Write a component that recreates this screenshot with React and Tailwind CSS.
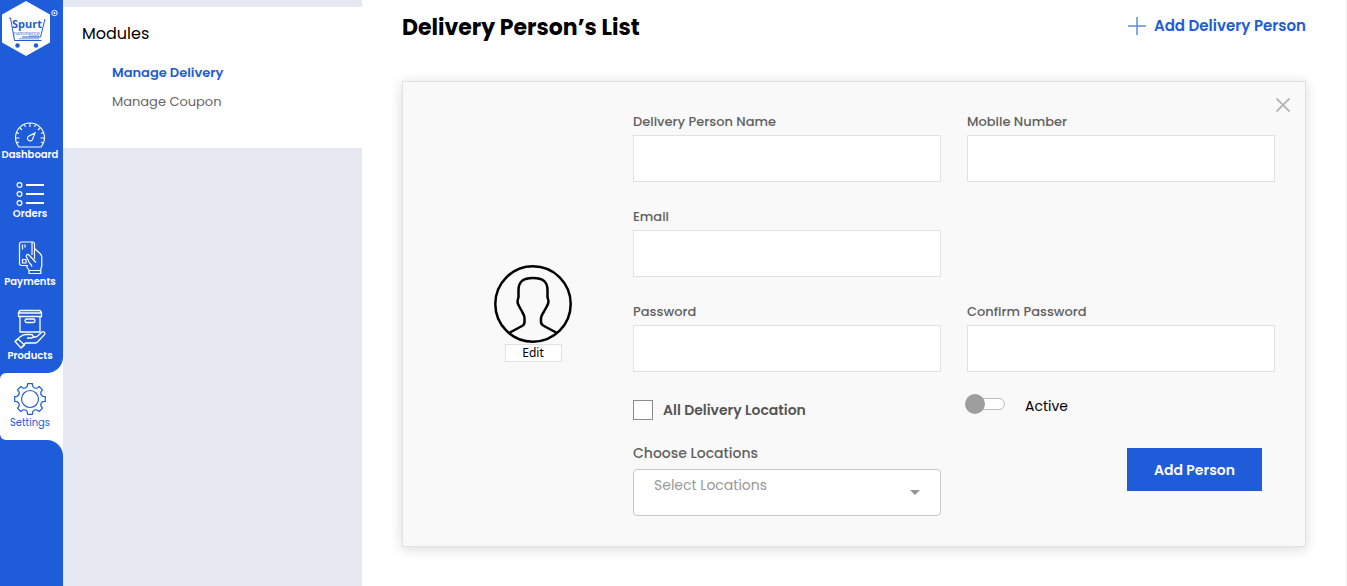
import { useState } from "react"

const gearPath = (() => {
    const point = (radius, angle) => {
        const rad = (angle * Math.PI) / 180
        return `${(17 + radius * Math.cos(rad)).toFixed(2)} ${(17 + radius * Math.sin(rad)).toFixed(2)}`
    }
    let d = ""
    for (let i = 0; i < 8; i++) {
        const a = i * 45 - 90
        d += `${i === 0 ? "M" : "L"}${point(13, a - 12)}L${point(15.5, a - 9)}`
        d += `L${point(15.5, a + 9)}L${point(13, a + 12)}`
        d += `Q${point(11, a + 22.5)} ${point(13, a + 33)}`
    }
    return d + "Z"
})()

function Logo() {
    return (
        <svg viewBox="0 0 63 57" className="w-full" role="img" aria-label="Spurt Commerce">
            <path d="M26 1 50 14.5v28L26 56 2 42.500v-28z" fill="#fff" />
            <g fill="none" stroke="#1e5cd9" strokeWidth="1">
                <path d="M9 18h1.500l4 22.500h27M45 19l-4.500 18H22" />
                <path d="M19 38.800h20M29 36h10" opacity=".6" />
            </g>
            <circle cx="17.500" cy="45.500" r="2.200" fill="#1e5cd9" />
            <circle cx="36" cy="45.500" r="2.200" fill="#1e5cd9" />
            <text x="27" y="28" textAnchor="middle" fontSize="11" fontWeight="700" fill="#1e5cd9" fontFamily="Open Sans, sans-serif">Spurt</text>
            <text x="26.500" y="35" textAnchor="middle" fontSize="5" fontStyle="italic" fill="#1e5cd9" fontFamily="DejaVu Sans, sans-serif">commerce</text>
            <circle cx="54.500" cy="13" r="2.700" fill="none" stroke="#fff" />
            <circle cx="54.500" cy="13" r="1" fill="#fff" />
        </svg>
    )
}

function DashboardIcon() {
    return (
        <svg viewBox="0 0 32 26" className="h-[26px] w-8" fill="none" stroke="currentColor" strokeWidth="1.1">
            <path d="M5 25A14.500 14.500 0 1 1 27 25Z" />
            <path d="M16 1v4M1.500 16h4M30.500 16h-4M5.700 5.700l2.300 2.300M26.300 5.700 24 8M10.400 2.600l1 2.300M21.600 2.600l-1 2.300M2.600 10.400l2.300 1M29.400 10.400l-2.300 1M3 21l2-1M29 21l-2-1" />
            <path d="m21 11-2.600 6.500a2.600 2.600 0 1 1-3.500-3.500z" />
        </svg>
    )
}

function OrdersIcon() {
    return (
        <svg viewBox="0 0 30 26" className="h-[26px] w-[30px]" fill="none" stroke="currentColor">
            <circle cx="4.500" cy="4" r="2.400" strokeWidth="1.200" />
            <circle cx="4.500" cy="13" r="2.400" strokeWidth="1.200" />
            <circle cx="4.500" cy="22" r="2.400" strokeWidth="1.200" />
            <path d="M11 4h18M11 13h18M11 22h18" strokeWidth="2" />
        </svg>
    )
}

function PaymentsIcon() {
    return (
        <svg viewBox="0 0 26 34" className="h-[34px] w-[26px]" fill="none" stroke="currentColor" strokeWidth="1.200" strokeLinejoin="round">
            <path d="M11 24.500H4.500a2 2 0 0 1-2-2V3a2 2 0 0 1 2-2h11a2 2 0 0 1 2 2v15" />
            <path d="M5.500 3.500v5M8 3.500v3M15 1v13M5.500 18.500H9V22H5.500z" />
            <path d="M17.500 7.500 23.500 13c.9 1 1.300 2 1.300 3.500V25l-1 3v4.500H12V29l-2-2.500V24" />
            <path d="M15 25.500c-.5-2-2-2.500-3-4.500l-2.500-5c-.6-2 1-3.500 2.500-2l7 7.500M12 29.500h11.500" />
        </svg>
    )
}

function ProductsIcon() {
    return (
        <svg viewBox="0 0 32 40" className="h-10 w-8" fill="none" stroke="currentColor" strokeWidth="1.300" strokeLinejoin="round">
            <path d="M4.500 3.500 6 1.500h20l1.500 2v4h-23zM4.500 4h23M6 7.500V23h20V7.500" />
            <rect x="11" y="10" width="10" height="3.500" rx="1.700" />
            <path d="M1 32.500 6 28c2-1.800 3.500-2.500 6-2.500h5c2.500 0 3 3 .5 3.500H13M18.500 28.500l4.500-1 5-4.500c1.800-1 3.500.5 2.500 2.500l-7 7.500c-1 1-1.500 1-3 1h-9l-3.500 4" />
            <path d="m1 32.500 3-2.500 6.500 6-3.500 3z" />
        </svg>
    )
}

function SettingsIcon() {
    return (
        <svg viewBox="0 0 34 34" className="h-[34px] w-[34px]" fill="none" stroke="currentColor" strokeWidth="1.200" strokeLinejoin="round">
            <path d={gearPath} />
            <circle cx="17" cy="17" r="8.500" />
        </svg>
    )
}

function NavItem({ icon, label }) {
    return (
        <a href="#" className="flex flex-col items-center text-[10px] leading-[14px] font-semibold text-white">
            {icon}
            {label}
        </a>
    )
}

function Sidebar() {
    return (
        <nav className="flex w-[63px] shrink-0 flex-col bg-white">
            <div className="rounded-br-2xl bg-[#1e5cd9] pb-2.5">
                <Logo />
                <div className="flex flex-col pt-[65px] pr-[3px]">
                    <NavItem icon={<DashboardIcon />} label="Dashboard" />
                    <div className="mt-[19px]">
                        <NavItem icon={<OrdersIcon />} label="Orders" />
                    </div>
                    <div className="mt-5">
                        <NavItem icon={<PaymentsIcon />} label="Payments" />
                    </div>
                    <div className="mt-5">
                        <NavItem icon={<ProductsIcon />} label="Products" />
                    </div>
                </div>
            </div>
            <div className="bg-[#1e5cd9]">
                <a href="#" className="flex flex-col items-center rounded-l-md bg-white pt-[9px] pr-[3px] pb-2.5 text-[10px] leading-[14px] text-[#1e5cd9]">
                    <SettingsIcon />
                    Settings
                </a>
            </div>
            <div className="flex-1 rounded-tr-2xl bg-[#1e5cd9]" />
        </nav>
    )
}

function Field({ id, label, type = "text" }) {
    return (
        <div className="flex flex-col gap-[3px]">
            <label htmlFor={id} className="text-[13px] leading-5 font-medium text-[#606060]">{label}</label>
            <input id={id} type={type} className="h-[47px] w-full border border-[#e1e1e1] bg-white px-3 text-sm outline-none" />
        </div>
    )
}

export default function App() {
    const [active, setActive] = useState(false)

    return (
        <div className="flex min-h-screen bg-white font-['Poppins','Inter',sans-serif] text-black">
            <Sidebar />

            {/* Modules */}
            <aside className="w-[299px] shrink-0 bg-[#e6e9f2] pt-[7px]">
                <div className="bg-white px-[19px] pt-[17px] pb-9">
                    <h2 className="text-base leading-5">Modules</h2>
                    <ul className="flex flex-col gap-[9px] pt-[19px] pl-[30px] text-[13px] leading-5">
                        <li><a href="#" className="font-semibold text-[#1e5cd9]">Manage Delivery</a></li>
                        <li><a href="#" className="text-[#666]">Manage Coupon</a></li>
                    </ul>
                </div>
            </aside>

            <main className="min-w-0 flex-1 border-r border-[#eee] px-10 pt-2">
                {/* Header */}
                <div className="flex h-9 items-center justify-between">
                    <h1 className="pt-0.5 text-[22px] font-bold">Delivery Person’s List</h1>
                    <button type="button" className="flex items-center gap-2 text-[15px] font-semibold text-[#1e5cd9]">
                        <svg viewBox="0 0 18 18" className="h-[18px] w-[18px]" stroke="#1e5cd9" strokeWidth="1.500" aria-hidden="true">
                            <path d="M9 0v18M0 9h18" opacity=".7" />
                        </svg>
                        Add Delivery Person
                    </button>
                </div>

                <form className="relative mt-[37px] flex border border-[#e1e1e1] bg-[#f9f9f9] py-[30px] pr-[30px] shadow-[0_2px_12px_rgba(0,0,0,0.15)]">
                    <button type="button" aria-label="Close" className="absolute top-4 right-[15px]">
                        <svg viewBox="0 0 14 14" className="h-3.5 w-3.5" stroke="#b0b0b0" strokeWidth="1.700">
                            <path d="m.5.500 13 13M13.500.500l-13 13" />
                        </svg>
                    </button>

                    {/* Avatar */}
                    <div className="flex w-[230px] shrink-0 flex-col items-center justify-center pb-0.5 pl-[30px]">
                        <svg viewBox="0 0 78 78" className="h-[78px] w-[78px]" fill="none" stroke="#000" strokeWidth="2.500" strokeLinejoin="round" aria-hidden="true">
                            <circle cx="39" cy="39" r="37.700" />
                            <path d="M15 68l13-7c2-1 2.500-2 2.500-4v-4c0-2-1-4-2.500-6.500L25 41c-1.800-3-1.800-6-.5-8.500V25c0-8 4-12 14.500-12s14.500 4 14.500 12v7.500c1.300 2.500 1.300 5.500-.5 8.500l-3 5.500C48.500 49 47 51 47 53v4c0 2 1 3 3 4l13 7" />
                        </svg>
                        <button type="button" className="mt-px h-[18px] w-[57px] border border-[#e1e1e1] bg-white font-['Noto_Sans',sans-serif] text-xs leading-4">Edit</button>
                    </div>

                    {/* Fields */}
                    <div className="min-w-0 flex-1">
                        <div className="grid grid-cols-2 gap-x-[26px] gap-y-[25px]">
                            <Field id="name" label="Delivery Person Name" />
                            <Field id="mobile" label="Mobile Number" />
                            <div className="col-span-2 grid grid-cols-2 gap-x-[26px]">
                                <Field id="email" label="Email" type="email" />
                            </div>
                            <Field id="password" label="Password" type="password" />
                            <Field id="confirm" label="Confirm Password" type="password" />

                            <label className="flex h-[26px] items-center gap-2.5 text-sm font-semibold text-[#555]">
                                <input type="checkbox" className="h-5 w-5 appearance-none border border-[#8c8c8c] bg-white checked:bg-[#1e5cd9]" />
                                All Delivery Location
                            </label>
                            <label className="flex h-[18px] items-center gap-5 text-sm">
                                <input
                                    type="checkbox"
                                    role="switch"
                                    checked={active}
                                    onChange={(e) => setActive(e.target.checked)}
                                    className="relative mb-1 h-3 w-[38px] appearance-none rounded-full border border-[#bdbdbd] bg-white before:absolute before:-top-[5px] before:-left-[3px] before:h-5 before:w-5 before:rounded-full before:bg-[#9e9e9e] checked:before:left-5 checked:before:bg-[#1e5cd9]"
                                />
                                Active
                            </label>
                        </div>

                        <div className="mt-5 grid grid-cols-2 gap-x-[26px]">
                            <div className="flex flex-col gap-1.5">
                                <label htmlFor="locations" className="text-sm leading-5 font-medium text-[#606060]">Choose Locations</label>
                                <div className="relative">
                                    <select id="locations" defaultValue="" className="h-[47px] w-full appearance-none rounded border border-[#c8c8c8] bg-white pr-10 pb-4 pl-5 text-sm text-[#999] outline-none">
                                        <option value="">Select Locations</option>
                                    </select>
                                    <svg viewBox="0 0 10 5" className="pointer-events-none absolute top-[21px] right-[21px] w-2.5" fill="#949494" aria-hidden="true">
                                        <path d="M0 0h10L5 5z" />
                                    </svg>
                                </div>
                            </div>
                            <div className="flex items-start justify-end pt-[5px] pr-[13px]">
                                <button type="submit" className="h-[43px] w-[135px] bg-[#1e5cd9] text-sm font-semibold text-white">Add Person</button>
                            </div>
                        </div>
                    </div>
                </form>
            </main>
        </div>
    )
}
